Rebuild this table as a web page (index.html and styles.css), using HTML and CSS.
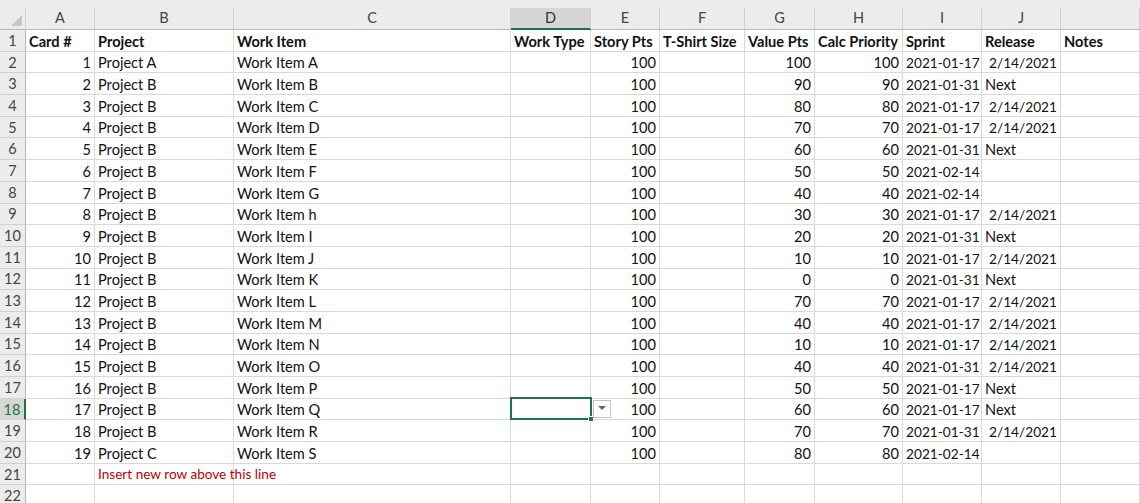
FILE: index.html
```html
<!DOCTYPE html>
<html>
<head>
<meta charset="utf-8">
<link rel="stylesheet" href="styles.css">
</head>
<body>
<div class="app">
  <div class="topband"></div>
  <div class="sheet">
    <div class="ch corner"><span class="tri"></span></div>
    <div class="ch">A</div><div class="ch">B</div><div class="ch">C</div><div class="ch sel-col">D</div><div class="ch">E</div><div class="ch">F</div><div class="ch">G</div><div class="ch">H</div><div class="ch">I</div><div class="ch">J</div><div class="ch"></div>

    <div class="rh">1</div><div class="c b">Card #</div><div class="c b">Project</div><div class="c b">Work Item</div><div class="c b">Work Type</div><div class="c b">Story Pts</div><div class="c b">T-Shirt Size</div><div class="c b">Value Pts</div><div class="c b">Calc Priority</div><div class="c b">Sprint</div><div class="c b">Release</div><div class="c b">Notes</div>

    <div class="rh">2</div><div class="c n">1</div><div class="c">Project A</div><div class="c">Work Item A</div><div class="c"></div><div class="c n">100</div><div class="c"></div><div class="c n">100</div><div class="c n">100</div><div class="c d">2021-01-17</div><div class="c n d">2/14/2021</div><div class="c"></div>
    <div class="rh">3</div><div class="c n">2</div><div class="c">Project B</div><div class="c">Work Item B</div><div class="c"></div><div class="c n">100</div><div class="c"></div><div class="c n">90</div><div class="c n">90</div><div class="c d">2021-01-31</div><div class="c">Next</div><div class="c"></div>
    <div class="rh">4</div><div class="c n">3</div><div class="c">Project B</div><div class="c">Work Item C</div><div class="c"></div><div class="c n">100</div><div class="c"></div><div class="c n">80</div><div class="c n">80</div><div class="c d">2021-01-17</div><div class="c n d">2/14/2021</div><div class="c"></div>
    <div class="rh">5</div><div class="c n">4</div><div class="c">Project B</div><div class="c">Work Item D</div><div class="c"></div><div class="c n">100</div><div class="c"></div><div class="c n">70</div><div class="c n">70</div><div class="c d">2021-01-17</div><div class="c n d">2/14/2021</div><div class="c"></div>
    <div class="rh">6</div><div class="c n">5</div><div class="c">Project B</div><div class="c">Work Item E</div><div class="c"></div><div class="c n">100</div><div class="c"></div><div class="c n">60</div><div class="c n">60</div><div class="c d">2021-01-31</div><div class="c">Next</div><div class="c"></div>
    <div class="rh">7</div><div class="c n">6</div><div class="c">Project B</div><div class="c">Work Item F</div><div class="c"></div><div class="c n">100</div><div class="c"></div><div class="c n">50</div><div class="c n">50</div><div class="c d">2021-02-14</div><div class="c"></div><div class="c"></div>
    <div class="rh">8</div><div class="c n">7</div><div class="c">Project B</div><div class="c">Work Item G</div><div class="c"></div><div class="c n">100</div><div class="c"></div><div class="c n">40</div><div class="c n">40</div><div class="c d">2021-02-14</div><div class="c"></div><div class="c"></div>
    <div class="rh">9</div><div class="c n">8</div><div class="c">Project B</div><div class="c">Work Item h</div><div class="c"></div><div class="c n">100</div><div class="c"></div><div class="c n">30</div><div class="c n">30</div><div class="c d">2021-01-17</div><div class="c n d">2/14/2021</div><div class="c"></div>
    <div class="rh">10</div><div class="c n">9</div><div class="c">Project B</div><div class="c">Work Item I</div><div class="c"></div><div class="c n">100</div><div class="c"></div><div class="c n">20</div><div class="c n">20</div><div class="c d">2021-01-31</div><div class="c">Next</div><div class="c"></div>
    <div class="rh">11</div><div class="c n">10</div><div class="c">Project B</div><div class="c">Work Item J</div><div class="c"></div><div class="c n">100</div><div class="c"></div><div class="c n">10</div><div class="c n">10</div><div class="c d">2021-01-17</div><div class="c n d">2/14/2021</div><div class="c"></div>
    <div class="rh">12</div><div class="c n">11</div><div class="c">Project B</div><div class="c">Work Item K</div><div class="c"></div><div class="c n">100</div><div class="c"></div><div class="c n">0</div><div class="c n">0</div><div class="c d">2021-01-31</div><div class="c">Next</div><div class="c"></div>
    <div class="rh">13</div><div class="c n">12</div><div class="c">Project B</div><div class="c">Work Item L</div><div class="c"></div><div class="c n">100</div><div class="c"></div><div class="c n">70</div><div class="c n">70</div><div class="c d">2021-01-17</div><div class="c n d">2/14/2021</div><div class="c"></div>
    <div class="rh">14</div><div class="c n">13</div><div class="c">Project B</div><div class="c">Work Item M</div><div class="c"></div><div class="c n">100</div><div class="c"></div><div class="c n">40</div><div class="c n">40</div><div class="c d">2021-01-17</div><div class="c n d">2/14/2021</div><div class="c"></div>
    <div class="rh">15</div><div class="c n">14</div><div class="c">Project B</div><div class="c">Work Item N</div><div class="c"></div><div class="c n">100</div><div class="c"></div><div class="c n">10</div><div class="c n">10</div><div class="c d">2021-01-17</div><div class="c n d">2/14/2021</div><div class="c"></div>
    <div class="rh">16</div><div class="c n">15</div><div class="c">Project B</div><div class="c">Work Item O</div><div class="c"></div><div class="c n">100</div><div class="c"></div><div class="c n">40</div><div class="c n">40</div><div class="c d">2021-01-31</div><div class="c n d">2/14/2021</div><div class="c"></div>
    <div class="rh">17</div><div class="c n">16</div><div class="c">Project B</div><div class="c">Work Item P</div><div class="c"></div><div class="c n">100</div><div class="c"></div><div class="c n">50</div><div class="c n">50</div><div class="c d">2021-01-17</div><div class="c">Next</div><div class="c"></div>
    <div class="rh sel-row">18</div><div class="c n">17</div><div class="c">Project B</div><div class="c">Work Item Q</div><div class="c active"><span class="selbox"><span class="handle"></span></span><span class="dd"><svg width="8" height="5" viewBox="0 0 8 5"><path d="M0 0h8L4 4z" fill="#666"/></svg></span></div><div class="c n">100</div><div class="c"></div><div class="c n">60</div><div class="c n">60</div><div class="c d">2021-01-17</div><div class="c">Next</div><div class="c"></div>
    <div class="rh">19</div><div class="c n">18</div><div class="c">Project B</div><div class="c">Work Item R</div><div class="c"></div><div class="c n">100</div><div class="c"></div><div class="c n">70</div><div class="c n">70</div><div class="c d">2021-01-31</div><div class="c n d">2/14/2021</div><div class="c"></div>
    <div class="rh">20</div><div class="c n">19</div><div class="c">Project C</div><div class="c">Work Item S</div><div class="c"></div><div class="c n">100</div><div class="c"></div><div class="c n">80</div><div class="c n">80</div><div class="c d">2021-02-14</div><div class="c"></div><div class="c"></div>
    <div class="rh">21</div><div class="c"></div><div class="c note">Insert new row above this line</div><div class="c"></div><div class="c"></div><div class="c"></div><div class="c"></div><div class="c"></div><div class="c"></div><div class="c"></div><div class="c"></div><div class="c"></div>
    <div class="rh">22</div><div class="c"></div><div class="c"></div><div class="c"></div><div class="c"></div><div class="c"></div><div class="c"></div><div class="c"></div><div class="c"></div><div class="c"></div><div class="c"></div><div class="c"></div>
  </div>
</div>
</body>
</html>
```

FILE: styles.css
```css
* { box-sizing: border-box; }
html, body { margin: 0; padding: 0; background: #ffffff; }
body { width: 1140px; height: 503px; overflow: hidden; font-family: Lato, "Open Sans", sans-serif; font-size: 14.6px; color: #111; }
.app { display: flex; flex-direction: column; }
.topband { height: 8px; background: #ececec; }
.sheet {
  display: grid;
  grid-template-columns: 26px 69px 139px 277px 80px 69px 85px 70px 88px 79px 79px 79px;
  grid-template-rows: 22px repeat(22, 21.7px);
}
.ch {
  background: #ececec;
  border-right: 1px solid #d0d0d0;
  border-bottom: 1px solid #b8b8b8;
  color: #444;
  font-size: 14.5px;
  display: flex;
  align-items: center;
  justify-content: center;
  line-height: 1;
}
.corner { position: relative; }
.tri {
  position: absolute; right: 3px; bottom: 3px;
  width: 0; height: 0;
  border-left: 11px solid transparent;
  border-bottom: 11px solid #c6c6c6;
}
.sel-col { background: #d6d6d6; border-bottom: 2px solid #217346; color: #333; }
.rh {
  background: #ececec;
  border-right: 1px solid #b8b8b8;
  border-bottom: 1px solid #d0d0d0;
  color: #444;
  font-size: 14.5px;
  display: flex;
  align-items: center;
  justify-content: center;
}
.sel-row { background: #d6d6d6; border-right: 2px solid #217346; color: #217346; }
.c {
  border-right: 1px solid #d9d9d9;
  border-bottom: 1px solid #d9d9d9;
  display: flex;
  align-items: flex-end;
  padding: 0 3px 0 3px;
  white-space: nowrap;
  overflow: visible;
  line-height: 19px;
}
.b { font-weight: bold; }
.n { justify-content: flex-end; }
.d { font-size: 13.7px; }
.note { color: #c00000; font-size: 13.6px; padding-bottom: 0; }
.active { position: relative; }
.selbox {
  position: absolute; left: -1px; top: -2px; right: -2px; bottom: -1px;
  border: 2px solid #217346;
  z-index: 2;
}
.handle {
  position: absolute; right: -4px; bottom: -4px;
  width: 6px; height: 6px;
  background: #217346;
  border: 1px solid #fff;
}
.dd {
  position: absolute; left: 82px; top: 1px;
  width: 18px; height: 18px;
  background: #fff;
  border: 1px solid #c4c4c4;
  display: flex; align-items: center; justify-content: center;
  z-index: 3;
}
```
